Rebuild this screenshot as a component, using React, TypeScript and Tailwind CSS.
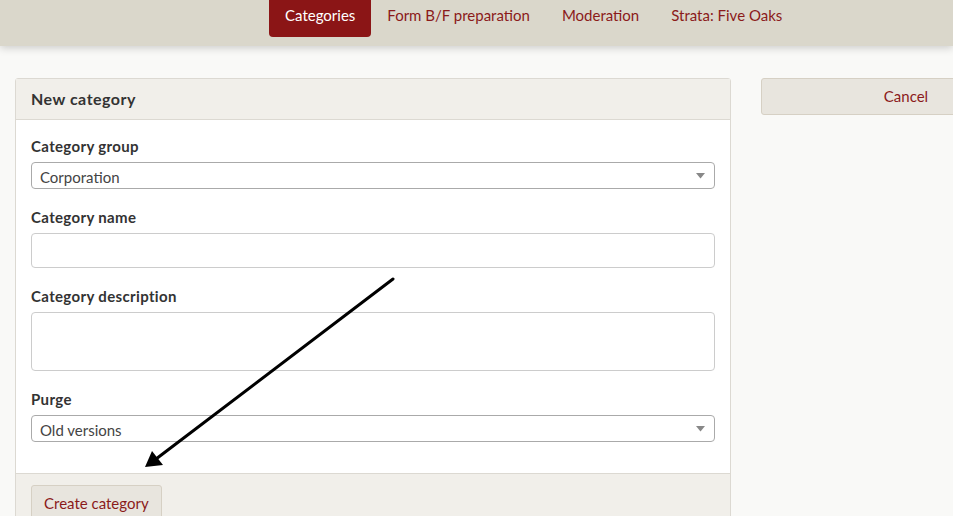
import React from "react"

const tabs = ["Categories", "Form B/F preparation", "Moderation", "Strata: Five Oaks"]

function Caret() {
  return (
    <svg width="9" height="6" viewBox="0 0 9 6" className="shrink-0">
      <path d="M0 0h9L4.5 5.5z" fill="#888" />
    </svg>
  )
}

function SelectBox({ value }: { value: string }) {
  return (
    <div className="flex h-[27px] items-center justify-between rounded-[4px] border border-[#aaa] bg-white pl-[8px] pr-[9px] text-[15px] text-[#444]">
      <span className="pt-[4px]">{value}</span>
      <Caret />
    </div>
  )
}

function Label({ children }: { children: React.ReactNode }) {
  return (
    <div className="mb-[7px] text-[15px] font-bold leading-[18px] tracking-[0.35px] text-[#333]">{children}</div>
  )
}

export default function App() {
  return (
    <div className="relative h-[516px] w-[953px] overflow-hidden bg-[#f9f9f7] font-['Lato','Liberation_Sans',sans-serif]">
      <header className="relative z-10 h-[46px] bg-[#dad7cb] shadow-[0_2px_8px_rgba(0,0,0,0.18)]">
        <nav className="flex pl-[269px]">
          {tabs.map((t, i) => (
            <div
              key={t}
              className={
                i === 0
                  ? "h-[37px] rounded-b-[4px] bg-[#8b1516] px-[16px] pt-[4px] text-[15px] text-white"
                  : "h-[37px] px-[16px] pt-[4px] text-[15px] text-[#8b1a1a]"
              }
            >
              {t}
            </div>
          ))}
        </nav>
      </header>

      <main className="flex gap-[30px] pl-[15px] pt-[32px]">
        <section className="w-[716px] shrink-0 rounded-[3px] border border-[#dcd9d2] bg-white">
          <div className="flex h-[41px] items-center border-b border-[#dcd9d2] bg-[#f1efea] px-[15px] text-[16px] font-bold tracking-[0.5px] text-[#333]">
            New category
          </div>
          <div className="px-[15px] pb-[31px] pt-[17px]">
            <Label>Category group</Label>
            <SelectBox value="Corporation" />

            <div className="mt-[19px]">
              <Label>Category name</Label>
              <div className="h-[35px] rounded-[4px] border border-[#ccc] bg-white" />
            </div>

            <div className="mt-[19px]">
              <Label>Category description</Label>
              <div className="h-[59px] rounded-[4px] border border-[#ccc] bg-white" />
            </div>

            <div className="mt-[19px]">
              <Label>Purge</Label>
              <SelectBox value="Old versions" />
            </div>
          </div>
          <div className="h-[60px] border-t border-[#dcd9d2] bg-[#f1efea] px-[15px] pt-[11px]">
            <button className="h-[36px] rounded-[3px] border border-[#d6d0c4] bg-[#e8e5de] px-[12px] text-[15px] text-[#8b1a1a]">
              Create category
            </button>
          </div>
        </section>

        <aside className="w-[290px] shrink-0">
          <button className="h-[37px] w-full rounded-[3px] border border-[#d6d0c4] bg-[#e8e5de] text-[15px] text-[#8b1a1a]">
            Cancel
          </button>
        </aside>
      </main>

      <svg className="pointer-events-none absolute left-0 top-0" width="953" height="516">
        <line x1="393" y1="279" x2="156" y2="459" stroke="#000" strokeWidth="3" strokeLinecap="round" />
        <path d="M145 467 L152 451 L163 465 Z" fill="#000" />
      </svg>
    </div>
  )
}
